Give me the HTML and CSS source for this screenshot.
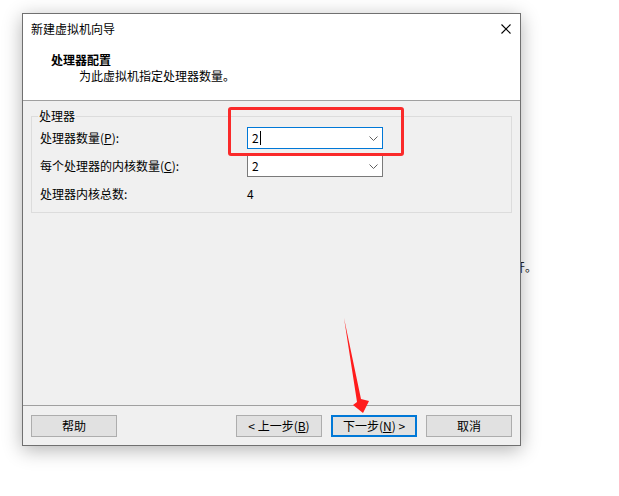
FILE: index.html
```html
<!DOCTYPE html>
<html>
<head>
	<meta charset="UTF-8">
	<title>新建虚拟机向导</title>
	<link rel="stylesheet" href="styles.css">
</head>
<body>
	<div class="bgtext">开。</div>

	<div class="wizard">
		<div class="head">
			<div class="titlebar">
				<span>新建虚拟机向导</span>
				<svg class="close" width="10" height="10" viewBox="0 0 10 10">
					<path d="M0.5 0.5L9.5 9.5M9.5 0.5L0.5 9.5" stroke="#000" stroke-width="1.1" fill="none"/>
				</svg>
			</div>
			<h2 class="step">处理器配置</h2>
			<p class="desc">为此虚拟机指定处理器数量。</p>
		</div>

		<div class="content">
			<fieldset class="group">
				<legend>处理器</legend>
				<div class="row">
					<span class="label">处理器数量(<u>P</u>):</span>
					<div class="combo focus">
						<span class="val">2</span><span class="caret"></span>
						<svg class="chev" width="9" height="5" viewBox="0 0 9 5"><path d="M0.5 0.5L4.5 4.5L8.5 0.5" stroke="#606060" fill="none"/></svg>
					</div>
				</div>
				<div class="row">
					<span class="label">每个处理器的内核数量(<u>C</u>):</span>
					<div class="combo">
						<span class="val">2</span>
						<svg class="chev" width="9" height="5" viewBox="0 0 9 5"><path d="M0.5 0.5L4.5 4.5L8.5 0.5" stroke="#606060" fill="none"/></svg>
					</div>
				</div>
				<div class="row">
					<span class="label">处理器内核总数:</span>
					<span class="total">4</span>
				</div>
			</fieldset>
		</div>

		<div class="foot">
			<button class="btn">帮助</button>
			<div class="nav">
				<button class="btn">&lt; 上一步(<u>B</u>)</button>
				<button class="btn default">下一步(<u>N</u>) &gt;</button>
				<button class="btn">取消</button>
			</div>
		</div>
	</div>

	<!-- 标注 -->
	<div class="mark"></div>
	<svg class="arrow" width="619" height="496" viewBox="0 0 619 496">
		<polygon points="344,318 361,399 369,401 363,413 353,405 357,402" fill="#ff1c1c"/>
	</svg>
</body>
</html>
```

FILE: styles.css
```css
body,h2,p{
	margin: 0;
	padding: 0;
}
body{
	width: 619px;
	height: 496px;
	overflow: hidden;
	position: relative;
	background: #fff;
	font-family: "Noto Sans CJK SC", "Microsoft YaHei", sans-serif;
	font-size: 12px;
	color: #000;
}
.bgtext{
	position: absolute;
	left: 513px;
	top: 259px;
	line-height: 16px;
	color: #222;
}
.wizard{
	position: absolute;
	left: 22px;
	top: 13px;
	width: 499px;
	height: 433px;
	box-sizing: border-box;
	border: 1px solid #707070;
	background: #f0f0f0;
	display: flex;
	flex-direction: column;
	box-shadow: 0 4px 18px rgba(0,0,0,0.3);
	z-index: 2;
}
.head{
	height: 79px;
	background: #fff;
	border-bottom: 1px solid #a0a0a0;
	padding-top: 7px;
}
.titlebar{
	display: flex;
	justify-content: space-between;
	align-items: center;
	height: 16px;
	line-height: 16px;
	padding: 0 9px 0 8px;
}
.close{
	display: block;
	margin-top: -1px;
}
.step{
	font-size: 12px;
	font-weight: bold;
	line-height: 16px;
	margin-top: 15px;
	padding-left: 28px;
}
.desc{
	line-height: 16px;
	padding-left: 56px;
}
.content{
	flex: 1;
	padding: 7px 8px 0;
}
.group{
	margin: 0;
	padding: 3px 8px 7px;
	border: 1px solid #dcdcdc;
	min-width: 0;
}
.group legend{
	padding: 0 1px;
	margin-left: -2px;
	line-height: 16px;
}
.row{
	display: flex;
	align-items: center;
	height: 22px;
	margin-bottom: 6px;
}
.row:last-child{
	margin-bottom: 0;
}
.label{
	width: 207px;
	line-height: 16px;
}
.combo{
	width: 136px;
	height: 22px;
	box-sizing: border-box;
	border: 1px solid #7a7a7a;
	background: #fff;
	display: flex;
	align-items: center;
	padding-left: 4px;
	line-height: 16px;
}
.combo.focus{
	border-color: #0078d7;
}
.caret{
	width: 1px;
	height: 14px;
	background: #000;
	margin-left: 1px;
}
.chev{
	margin-left: auto;
	margin-right: 4px;
	display: block;
}
.total{
	line-height: 16px;
}
.foot{
	border-top: 1px solid #a0a0a0;
	padding: 9px 8px 8px 8px;
	display: flex;
	justify-content: space-between;
}
.nav{
	display: flex;
	gap: 9px;
}
.btn{
	width: 86px;
	height: 22px;
	box-sizing: border-box;
	border: 1px solid #adadad;
	background: #e1e1e1;
	font-family: inherit;
	font-size: 12px;
	color: #000;
	padding: 0;
	line-height: 18px;
}
.btn.default{
	border: 2px solid #0078d7;
}
.mark{
	position: absolute;
	left: 228px;
	top: 107px;
	width: 176px;
	height: 49px;
	box-sizing: border-box;
	border: 3px solid #fa2a2a;
	border-radius: 3px;
	z-index: 3;
}
.arrow{
	position: absolute;
	left: 0;
	top: 0;
	z-index: 3;
}
```
